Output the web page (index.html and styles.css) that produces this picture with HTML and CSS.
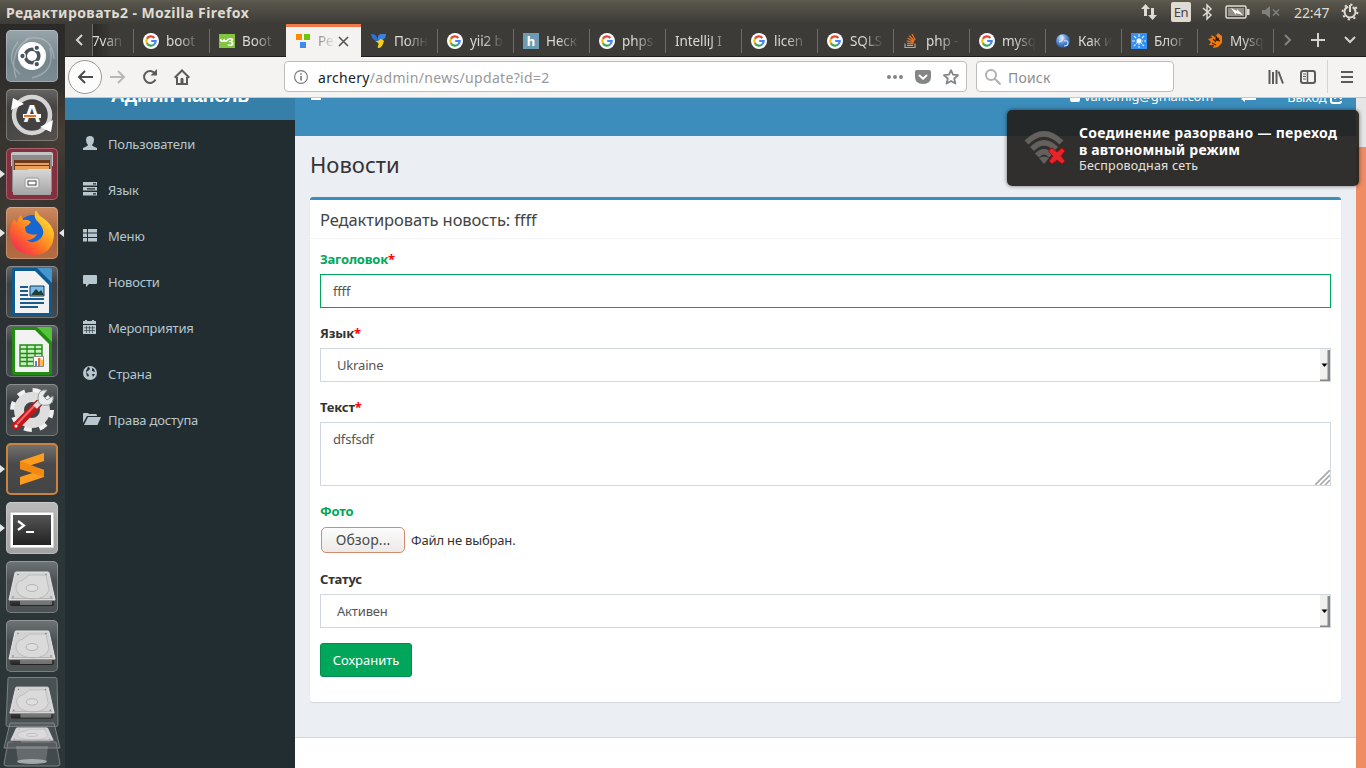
FILE: index.html
```html
<!DOCTYPE html>
<html lang="ru">
<head>
<meta charset="utf-8">
<title>Редактировать2 - Mozilla Firefox</title>
<link rel="stylesheet" href="styles.css">
</head>
<body>
<svg class="defs" width="0" height="0">
  <defs>
    <linearGradient id="metal" x1="0" y1="0" x2="0" y2="1"><stop offset="0" stop-color="#d8d8d8"/><stop offset="1" stop-color="#a4a4a4"/></linearGradient>
    <linearGradient id="dark" x1="0" y1="0" x2="0" y2="1"><stop offset="0" stop-color="#555"/><stop offset="1" stop-color="#222"/></linearGradient>
    <linearGradient id="fire" x1="1" y1="0" x2="0.1" y2="1"><stop offset="0" stop-color="#fff44f"/><stop offset="0.35" stop-color="#ffb422"/><stop offset="0.65" stop-color="#ff6a2a"/><stop offset="1" stop-color="#f0205a"/></linearGradient>
    <radialGradient id="ball" cx="0.4" cy="0.3" r="0.7"><stop offset="0" stop-color="#dbe9fb"/><stop offset="0.5" stop-color="#5c8fd6"/><stop offset="1" stop-color="#234f9b"/></radialGradient>
    <symbol id="google" viewBox="0 0 16 16">
      <circle cx="8" cy="8" r="8" fill="#fff"/>
      <g fill="none" stroke-width="2.2">
        <path d="M11.4 4.9A4.7 4.7 0 0 0 3.9 5.7" stroke="#ea4335"/>
        <path d="M3.9 5.7A4.7 4.7 0 0 0 3.9 10.3" stroke="#fbbc05"/>
        <path d="M3.9 10.3A4.7 4.7 0 0 0 11.1 11.5" stroke="#34a853"/>
        <path d="M11.1 11.5A4.6 4.6 0 0 0 12.7 8H8.2" stroke="#4285f4"/>
      </g>
    </symbol>
    <symbol id="disk" viewBox="0 0 52 52">
      <path d="M4 35h44v8q0 2-2 2H6q-2 0-2-2z" fill="url(#dark)"/>
      <path d="M24 40h22v4H14v-4z" fill="#999" opacity=".65"/>
      <path d="M9 12q0-1 1-1h32q1 0 1 1l6 27H3z" fill="#d3d3d3" stroke="#e6e6e6"/>
      <path d="M10 28q-1-7 7-9l6-5h17l3 15q-3 9-17 9-14-1-16-10z" fill="#dadada" stroke="#bcbcbc"/>
      <ellipse cx="26" cy="27" rx="6" ry="3.500" fill="#dfdfdf" stroke="#b2b2b2"/>
      <path d="M5 37.500h42" stroke="#b4b4b4"/>
      <circle cx="7" cy="36" r=".8" fill="#777"/><circle cx="45" cy="36" r=".8" fill="#777"/>
      <circle cx="12" cy="13.500" r=".7" fill="#777"/><circle cx="40" cy="13.500" r=".7" fill="#777"/>
    </symbol>
    <symbol id="drop" viewBox="0 0 10 32">
      <path d="M0 0h10v32H0z" fill="#f0f0ef"/>
      <path d="M7.500 1H10v31H0v-1.500h7.500z" fill="#858585"/>
      <path d="M1.500 14.500h6l-3 3.500z" fill="#000"/>
    </symbol>
  </defs>
</svg>

<div class="desktop">
  <header class="panel">
    <span class="panel-title">Редактировать2 - Mozilla Firefox</span>
    <div class="indicators">
      <svg width="18" height="18" viewBox="0 0 18 18" fill="#dfdbd2"><path d="M5.500 1L10 6H7v7H4V6H1zM12.500 17L8 12h3V5h3v7h3z"/></svg>
      <span class="lang">En</span>
      <svg class="bt" width="12" height="18" viewBox="0 0 12 18" fill="none" stroke="#dfdbd2" stroke-width="1.500"><path d="M2 5l8 7-4 4V2l4 4-8 7"/></svg>
      <svg class="bat" width="25" height="14" viewBox="0 0 25 14"><rect x="1" y="1" width="20" height="12" rx="1.500" fill="none" stroke="#dfdbd2" stroke-width="1.500"/><rect x="3" y="3" width="16" height="8" fill="#928f87"/><path d="M22 4h2.500v6H22z" fill="#dfdbd2"/><path d="M6 3l6 3 0-2 6 6-7-2 0 2z" fill="#fff"/></svg>
      <svg class="vol" width="18" height="14" viewBox="0 0 18 14" fill="#82807a"><path d="M0 5h3l5-4v12L3 9H0z"/><path d="M11 4.500l6 6m0-6l-6 6" stroke="#82807a" stroke-width="1.600"/></svg>
      <span class="clock">22:47</span>
      <svg class="gear" width="18" height="18" viewBox="0 0 18 18" fill="none" stroke="#dfdbd2"><circle cx="9" cy="9" r="5.500" stroke-width="2" stroke-dasharray="30 4.600" stroke-dashoffset="-28"/><path d="M9 2v7" stroke-width="2"/><circle cx="9" cy="9" r="7.400" stroke-width="2" stroke-dasharray="2.200 3.610"/></svg>
    </div>
  </header>

  <div class="main">
    <nav class="launcher">
      <div class="tile t-dash"><svg viewBox="0 0 52 52"><g fill="none" stroke="#fff" opacity=".25" stroke-width="1.500"><path d="M10 48Q2 20 24 8M20 9q26-6 28 20M44 18q6 24-18 30M12 12Q-2 30 14 44"/></g><circle cx="26" cy="26" r="14" fill="#fff"/><circle cx="26" cy="26" r="6.800" fill="none" stroke="#4a555b" stroke-width="3.600"/><g fill="#4a555b" stroke="#fff" stroke-width="1.300"><circle cx="16.500" cy="26" r="2.800"/><circle cx="30.800" cy="17.800" r="2.800"/><circle cx="30.800" cy="34.200" r="2.800"/></g></svg></div>
      <div class="tile t-glass"><svg viewBox="0 0 52 52"><circle cx="26" cy="26" r="18" fill="#444240" stroke="#d4d4d4" stroke-width="4.500"/><path d="M5 21l2-12 11 6zM47 31l-2 12-11-5z" fill="#fff"/><text x="26" y="33" class="a-letter">A</text><path d="M17 27h18" stroke="#fff" stroke-width="4"/><path d="M18 27h12" stroke="#f46a1f" stroke-width="2"/></svg></div>
      <div class="tile t-files running"><svg viewBox="0 0 52 52"><path d="M7 4h38q2 0 2 2v12H5V6q0-2 2-2z" fill="#c4c4c4"/><path d="M6 7h40v37H6z" fill="#8d8d8d"/><path d="M8 12h36v12H8z" fill="#6d3b1b"/><path d="M9 15h34v2H9zM9 18h34v4H9z" fill="#e8a05a"/><path d="M7 22h14l2-1h22v25q0 1-1 1H8q-1 0-1-1z" fill="url(#metal)"/><rect x="19" y="30" width="14" height="10" rx="2" fill="#eee" stroke="#999"/><rect x="22" y="33" width="8" height="4" fill="#fff" stroke="#444"/></svg></div>
      <div class="tile t-fox running active"><svg viewBox="0 0 52 52"><circle cx="27" cy="24" r="16" fill="#1767d2"/><path d="M30 3q2 5 7 8 9 6 11 15 0 22-22 22Q5 46 4 26q0-8 4-14l3 4q1-5 4-8l2 5q5-1 8 2-2 3-6 5 0 4 2 6 6 3 10 1-3 6-10 6 6 5 13-1 7-7-1-16-7-6-3-13z" fill="url(#fire)"/></svg></div>
      <div class="tile t-glass"><svg viewBox="0 0 52 52"><path d="M8 2h24l14 14v32q0 2-2 2H8q-2 0-2-2V4q0-2 2-2z" fill="#0d5a91"/><path d="M9 5h20l14 14v28H9z" fill="#f2f2f2"/><path d="M31 2h13q2 0 2 2v13z" fill="#4695cf"/><path d="M14 21h8M14 25h8M14 29h8M14 33h24M14 37h24M14 41h18" stroke="#1b5c8c" stroke-width="2"/><path d="M24 20h14v10H24z" fill="#76bde8" stroke="#173c5a"/><path d="M25 29l5-6 3 3 2-2 3 5z" fill="#263c36"/></svg></div>
      <div class="tile t-glass"><svg viewBox="0 0 52 52"><path d="M8 2h24l14 14v32q0 2-2 2H8q-2 0-2-2V4q0-2 2-2z" fill="#218b12"/><path d="M9 5h20l14 14v28H9z" fill="#f2f2f2"/><path d="M31 2h13q2 0 2 2v13z" fill="#56c43a"/><path d="M14 20h22v21H14z" fill="#c9f0c2"/><path d="M14 20h22v21H14zM14 24h22M14 28.500h22M14 32.500h22M14 36.500h22M21 20v21M29 20v21" fill="none" stroke="#218b12" stroke-width="1.400"/><path d="M27.500 31.500h10v10h-10z" fill="#fff" stroke="#888"/><path d="M29 36h2v5h-2z" fill="#3a8fd8"/><path d="M32 33h2.500v8H32z" fill="#f06a1e"/><path d="M35 35h2v6h-2z" fill="#f2c321"/></svg></div>
      <div class="tile t-glass"><svg viewBox="0 0 52 52"><circle cx="26" cy="26" r="19.500" fill="none" stroke="#f0f0f0" stroke-width="5" stroke-dasharray="7.700 7.615"/><circle cx="26" cy="26" r="13" fill="none" stroke="#dedede" stroke-width="10"/><path d="M10 42L32 20" stroke="#c3171d" stroke-width="8" stroke-linecap="round"/><path d="M11 40L31 19" stroke="#ef6a68" stroke-width="2"/><path d="M29 23l6-6" stroke="#d9dede" stroke-width="5"/><path d="M41 6q-9-1-9 8t10 7q6-2 5-9l-6 4-4-4z" fill="#e8ecec" stroke="#939b9b"/><circle cx="10" cy="42" r="1.500" fill="#fff"/></svg></div>
      <div class="tile t-sub running"><svg viewBox="0 0 52 52"><path d="M14 18l24-8v8l-14 4.500L38 27v7l-24 8v-8l14-4.500L14 26z" fill="#ff9c1d"/><path d="M14 18l24 9v7l-24-8z" fill="#f28a12"/></svg></div>
      <div class="tile t-term running"><svg viewBox="0 0 52 52"><path d="M4 10h44v36H4z" fill="#fff" stroke="#aaa"/><path d="M7 13h38v30H7z" fill="url(#dark)"/><path d="M12 19l6 4.500-6 4.500M20 30h8" fill="none" stroke="#fff" stroke-width="2.200"/></svg></div>
      <div class="tile t-disk"><svg viewBox="0 0 52 52"><use href="#disk"/></svg></div>
      <div class="tile t-disk"><svg viewBox="0 0 52 52"><use href="#disk"/></svg></div>
      <svg class="stack" width="58" height="93" viewBox="0 0 58 93">
        <path d="M5 2.500q0-1 1-1h46q2 0 2 2l1 45q0 2-2 2H5q-2 0-2-2z" fill="#6e7476" fill-opacity=".45" stroke="#7c8284"/>
        <svg x="4" y="1" width="50" height="48" viewBox="0 0 52 52" preserveAspectRatio="none"><use href="#disk"/></svg>
        <path d="M7 47h44l6 25H1z" fill="#6e7476" fill-opacity=".4" stroke="#7c8284"/>
        <svg x="5" y="47" width="48" height="23" viewBox="0 0 52 52" preserveAspectRatio="none"><use href="#disk"/></svg>
        <path d="M5 66h48l4 22q0 2-3 2H4q-3 0-3-2z" fill="#888" fill-opacity=".25" stroke="#7c8284"/>
        <path d="M13 70h32l-2 16H15z" fill="#ccc" fill-opacity=".25"/><ellipse cx="29" cy="85.500" rx="15" ry="2.500" fill="#b8bcbc" opacity=".8"/>
      </svg>
    </nav>

    <div class="window">
      <div class="tabs">
        <span class="scroll-l"><svg width="8" height="12" viewBox="0 0 8 12" fill="none" stroke="#d5d3ce" stroke-width="2"><path d="M7 1L2 6l5 5"/></svg></span>
        <div class="tab cut"><span class="label">7van</span></div>
        <div class="tab"><svg class="fav"><use href="#google"/></svg><span class="label">boot</span></div>
        <div class="tab"><svg class="fav" viewBox="0 0 16 16"><path d="M0 1h16v14H0z" fill="#83c441"/><path d="M1.500 6q1 4 3.500 1 1 3 4.500-1" fill="none" stroke="#fff" stroke-width="1.600"/><text x="8.600" y="12.500" class="w3">3</text></svg><span class="label">Boot</span></div>
        <div class="tab on"><svg class="fav" viewBox="0 0 16 16"><path d="M1 1h6v6H1z" fill="#ff8a00"/><path d="M9 1h6v6H9z" fill="#70c600"/><path d="M5 9h6v6H5z" fill="#3b8cf0"/></svg><span class="label">Ре</span><svg class="close" width="11" height="11" viewBox="0 0 11 11"><path d="M1 1l9 9M10 1l-9 9" stroke="#555" stroke-width="1.600"/></svg></div>
        <div class="tab first"><svg class="fav" viewBox="0 0 16 16"><path d="M0 1q6-1 7 7Q1 8 0 1z" fill="#2e72d8"/><path d="M7 8Q6 1 10 1l5 0q0 6-6 6z" fill="#3a82dc"/><path d="M4 8q5 0 5-2 3 0 4 2-2 7-5 7-2 0-1-2 2-3-3-5z" fill="#f5cf1d"/></svg><span class="label">Полн</span></div>
        <div class="tab"><svg class="fav"><use href="#google"/></svg><span class="label">yii2 b</span></div>
        <div class="tab"><svg class="fav" viewBox="0 0 16 16"><path d="M0 0h16v16H0z" fill="#6c9cb5"/><text x="8" y="13" class="habr">h</text></svg><span class="label">Неск</span></div>
        <div class="tab"><svg class="fav"><use href="#google"/></svg><span class="label">phps</span></div>
        <div class="tab"><span class="label wide">IntelliJ I</span></div>
        <div class="tab"><svg class="fav"><use href="#google"/></svg><span class="label">licen</span></div>
        <div class="tab"><svg class="fav"><use href="#google"/></svg><span class="label">SQLS</span></div>
        <div class="tab"><svg class="fav" viewBox="0 0 16 16" fill="none"><path d="M2 10.500v4h10v-4M4 12.500h6" stroke="#a9abad" stroke-width="1.200"/><path d="M4 10.500l6.500.3M3.800 7.800l6.700 1.900M4.500 5l6.200 3.600M6.300 2.800l5 5.200M9 1l3.200 6" stroke="#e87522" stroke-width="1.300"/></svg><span class="label">php -</span></div>
        <div class="tab"><svg class="fav"><use href="#google"/></svg><span class="label">mysq</span></div>
        <div class="tab"><svg class="fav" viewBox="0 0 16 16"><circle cx="8" cy="8" r="7" fill="url(#ball)"/><path d="M5 3q3-1 3 2T4 9M9 8q4-1 4 2t-4 3" fill="none" stroke="#d8e6f7" stroke-width="1.200"/></svg><span class="label">Как и</span></div>
        <div class="tab"><svg class="fav" viewBox="0 0 16 16"><path d="M0 0h16v16H0z" fill="#3390f5"/><path d="M8 1v14M1 8h14M3 3l10 10M13 3L3 13" stroke="#d6eaff" stroke-width="1.200" stroke-dasharray="3 1"/><circle cx="8" cy="8" r="2" fill="#fff"/></svg><span class="label">Блог</span></div>
        <div class="tab"><svg class="fav" viewBox="0 0 16 16"><path d="M1 6l4-1-1-3 4 2 3-4 4 3v7l-4 4-5 1 1-3-5 0 2-3z" fill="#f37a0b"/><path d="M6 6l3 3M9 3v4l4 1M5 10l4 2M12 5l-2 1" stroke="#4b2606" stroke-width="1.200"/></svg><span class="label">Mysq</span></div>
        <div class="tab-tools">
          <svg width="8" height="12" viewBox="0 0 8 12" fill="none" stroke="#85837e" stroke-width="2"><path d="M1 1l5 5-5 5"/></svg>
          <svg width="14" height="14" viewBox="0 0 14 14" stroke="#d5d3ce" stroke-width="2"><path d="M7 0v14M0 7h14"/></svg>
          <svg width="12" height="8" viewBox="0 0 12 8" fill="none" stroke="#d5d3ce" stroke-width="2"><path d="M1 1l5 5 5-5"/></svg>
        </div>
      </div>

      <div class="toolbar">
        <span class="back"><svg width="16" height="14" viewBox="0 0 16 14" fill="none" stroke="#4c4c4c" stroke-width="2"><path d="M16 7H2M8 1L2 7l6 6"/></svg></span>
        <svg class="fwd" width="16" height="14" viewBox="0 0 16 14" fill="none" stroke="#b9b8b6" stroke-width="2"><path d="M0 7h14M8 1l6 6-6 6"/></svg>
        <svg class="reload" width="16" height="16" viewBox="0 0 16 16" fill="none" stroke="#5c5b59" stroke-width="2"><path d="M13.500 10.500A6 6 0 1 1 13 4.500"/><path d="M15 0v6.500H8.500z" fill="#5c5b59" stroke="none"/></svg>
        <svg class="home" width="16" height="16" viewBox="0 0 16 16" fill="none" stroke="#5c5b59" stroke-width="2"><path d="M.700 8.700L8 1.500l7.300 7.200M3 8v7h10V8"/><path d="M7 9.500h2V15H7z" fill="#5c5b59" stroke-width="1"/></svg>
        <div class="url">
          <svg width="14" height="14" viewBox="0 0 14 14" fill="none" stroke="#777"><circle cx="7" cy="7" r="6.400" stroke-width="1.100"/><path d="M7 6v4.500M7 3.200v1.600" stroke-width="1.600"/></svg>
          <span class="addr"><b>archery</b>/admin/news/update?id=2</span>
          <svg class="dots" width="16" height="4" viewBox="0 0 16 4" fill="#858585"><circle cx="2" cy="2" r="2"/><circle cx="8" cy="2" r="2"/><circle cx="14" cy="2" r="2"/></svg>
          <svg class="pocket" width="16" height="15" viewBox="0 0 16 15"><path d="M2 0h12q2 0 2 2v5q0 7-8 7T0 7V2q0-2 2-2z" fill="#858585"/><path d="M4.500 5.500L8 8.700l3.500-3.200" fill="none" stroke="#fff" stroke-width="2" stroke-linecap="round"/></svg>
          <svg width="16" height="16" viewBox="0 0 16 16" fill="none" stroke="#858585" stroke-width="1.800" stroke-linejoin="round"><path d="M8 1.200l2 4.500 5 .5-3.800 3.300 1.200 5L8 12l-4.400 2.500 1.200-5L1 6.200l5-.5z"/></svg>
        </div>
        <div class="search">
          <svg width="16" height="16" viewBox="0 0 16 16" fill="none" stroke="#b0b0b0" stroke-width="2"><circle cx="6" cy="6" r="5"/><path d="M9.500 9.500l6 6"/></svg>
          <span>Поиск</span>
        </div>
        <svg class="lib" width="16" height="14" viewBox="0 0 16 14" stroke="#5c5b59" stroke-width="2"><path d="M1.500 0v14M5 2v12M8.500 0v14M10.500 1.500L15 13.500"/></svg>
        <svg class="side" width="16" height="14" viewBox="0 0 16 14" fill="none" stroke="#5c5b59" stroke-width="2"><rect x="1" y="1" width="14" height="12" rx="2"/><path d="M7.500 1v12" stroke-width="1.500"/><path d="M3 4h3M3 6.500h3M3 9h3" stroke-width="1"/></svg>
        <span class="sep"></span>
        <svg class="burger" width="12" height="12" viewBox="0 0 12 12" stroke="#5c5b59" stroke-width="2"><path d="M0 1h12M0 6h12M0 11h12"/></svg>
      </div>

      <div class="page">
        <aside class="sidebar">
          <div class="logo"><span>Админ панель</span></div>
          <ul class="menu">
            <li><svg viewBox="0 0 16 14"><path d="M7 0q4 0 4 4 0 3-2 5 0 1 5 3v2H0v-2q5-2 5-3-2-2-2-5 0-4 4-4z"/></svg>Пользователи</li>
            <li><svg viewBox="0 0 16 14"><path d="M0 0h14v3.500H0zM0 5h14v3.500H0zM0 10h14v3.500H0z"/><path d="M10 1.800h3M4 6.800h8M10 11.800h3" stroke="#222d32" stroke-width="1.200"/></svg>Язык</li>
            <li><svg viewBox="0 0 16 14"><path d="M0 1h4v3.500H0zM5 1h9v3.500H5zM0 5.500h4V9H0zM5 5.500h9V9H5zM0 10h4v3.500H0zM5 10h9v3.500H5z"/></svg>Меню</li>
            <li><svg viewBox="0 0 16 14"><path d="M1 1h12q1 0 1 1v7q0 1-1 1H6l-3 3v-3H1q-1 0-1-1V2q0-1 1-1z"/></svg>Новости</li>
            <li><svg viewBox="0 0 16 14"><path d="M0 1h2V0h2v1h5V0h2v1h2v3H0zM0 5h13v9H0z"/><path d="M3.500 6v7M6.500 6v7M9.500 6v7M1 7.800h11M1 10.500h11" stroke="#222d32" stroke-width=".6"/></svg>Мероприятия</li>
            <li><svg viewBox="0 0 16 14"><circle cx="7" cy="7" r="7"/><path d="M5 1q2 0 2 2L5 5q-2 0-1 2l2 2-1 2Q3 9 3 5zM9 2l2 1 1 3-3-1zM9 8l3 0-2 3z" fill="#222d32"/></svg>Страна</li>
            <li><svg class="wide-ico" viewBox="0 0 18 14"><path d="M0 11V2q0-1 1-1h4l1 1h7q1 0 1 2H4z"/><path d="M5 5h13l-3.500 8H1z"/></svg>Права доступа</li>
          </ul>
        </aside>
        <main class="content">
          <div class="navbar">
            <span class="toggle"></span>
            <span class="user"><i></i>vanolmig@gmail.com</span>
            <svg class="swap" width="16" height="8" viewBox="0 0 16 8" fill="#fff"><path d="M0 5l4-3v2h11v2H4v2z"/></svg>
            <span class="exit">Выход <svg width="14" height="12" viewBox="0 0 14 12" fill="none" stroke="#fff" stroke-width="2"><path d="M6 1H3Q1 1 1 3v6q0 2 2 2h6q2 0 2-2M5 7q0-3 7-3M10 1l3 3-3 3"/></svg></span>
          </div>
          <h1>Новости</h1>
          <section class="box">
            <h3>Редактировать новость: ffff</h3>
            <form class="form">
              <div class="group ok"><label>Заголовок<em>*</em></label><div class="control">ffff</div></div>
              <div class="group"><label>Язык<em>*</em></label><div class="control select"><span>Ukraine</span><svg width="10" height="32"><use href="#drop"/></svg></div></div>
              <div class="group"><label>Текст<em>*</em></label><div class="control area"><span>dfsfsdf</span><svg width="15" height="15" viewBox="0 0 15 15" stroke="#aaa" stroke-width="1.700"><path d="M0 15L15 0M5 15L15 5M10 15l5-5"/></svg></div></div>
              <div class="group ok"><label>Фото</label><div class="file"><span class="browse">Обзор...</span><span class="nofile">Файл не выбран.</span></div></div>
              <div class="group"><label>Статус</label><div class="control select"><span>Активен</span><svg width="10" height="32"><use href="#drop"/></svg></div></div>
              <button class="save" type="button">Сохранить</button>
            </form>
          </section>
          <div class="footer"></div>
        </main>
        <div class="scrollbar"><div class="thumb"></div></div>
      </div>
    </div>
  </div>

  <div class="toast">
    <svg width="44" height="38" viewBox="0 0 44 38"><g fill="none" stroke="#63605d" stroke-width="5.600"><path d="M2.500 12.500Q20 -5 37.500 12.500"/><path d="M8 19Q20 7 32 19"/><path d="M13 25.500Q20 18 27 25.500"/></g><path d="M15 28q5-3 10 0L20 34z" fill="#63605d"/><path d="M25 20l3-2 5 4 5-4 3 3-4 5 4 5-3 3-5-4-5 4-3-3 4-5-4-4z" fill="#e4252a" stroke="#a8090e"/></svg>
    <div class="toast-text"><b>Соединение разорвано — переход</b><b class="l2">в автономный режим</b><span>Беспроводная сеть</span></div>
  </div>
</div>
</body>
</html>
```
FILE: styles.css
```css
* { box-sizing: border-box; }
body { margin: 0; width: 1366px; height: 768px; overflow: hidden; font-family: "Noto Sans", sans-serif; }
.defs { position: absolute; }
.desktop { position: relative; width: 1366px; height: 768px; display: flex; flex-direction: column; overflow: hidden; }
svg { display: block; flex: none; }

/* top panel */
.panel { height: 24px; flex: none; display: flex; align-items: center; justify-content: space-between; padding: 0 7px 0 6px; background: linear-gradient(#5f5c50, #57544b 3px, #3d3b37); color: #dfdbd2; }
.panel-title { font-size: 14px; font-weight: 700; letter-spacing: .42px; }
.indicators { display: flex; align-items: center; }
.lang { margin-left: 13px; width: 20px; height: 20px; border-radius: 2px; background: #dfdbd2; color: #45433e; font-size: 13px; line-height: 20px; text-align: center; letter-spacing: -.5px; }
.bt { margin-left: 10px; }
.bat { margin-left: 12px; }
.vol { margin-left: 12px; }
.clock { margin-left: 14px; width: 37px; font-size: 14px; letter-spacing: -.1px; white-space: nowrap; }
.gear { margin-left: 10px; }

.main { flex: 1; display: flex; min-height: 0; }

/* launcher */
.launcher { width: 65px; flex: none; display: flex; flex-direction: column; align-items: center; gap: 7px; padding-top: 6px; padding-right: 1px;
  background: radial-gradient(circle at 20px 200px, #5a4a3c66, transparent 60px), radial-gradient(circle at 60px 110px, #6a56424d, transparent 50px), linear-gradient(#2b2a29, #38342f 120px, #2c2f30 230px, #2b3336 350px, #2c3639); }
.tile { position: relative; width: 52px; height: 52px; flex: none; border-radius: 5px; box-shadow: inset 0 0 0 1px #ffffff40; }
.tile > svg { width: 52px; height: 52px; }
.t-dash { background: linear-gradient(#98a4a9, #74858d 60%, #7d8d93); }
.t-glass { background: linear-gradient(#8a8a8a99, #5b5e6059 35%, #65686a73); }
.t-files { background: #84303f; }
.t-fox { background: linear-gradient(#cf8a60, #a9663f 50%, #b46c42); }
.t-sub { background: linear-gradient(#777470, #4a4a4b 40%, #434446); box-shadow: inset 0 0 0 2px #c98240; }
.t-term { background: linear-gradient(#b9b9b9, #a2a2a2); }
.t-disk { background: linear-gradient(#6f7577, #4a5052 40%, #4d5355); }
.running::before { content: ""; position: absolute; left: -6px; top: 22px; border: 4px solid transparent; border-left: 5px solid #e6e6e6; border-right: 0; }
.active::after { content: ""; position: absolute; right: -6px; top: 22px; border: 4px solid transparent; border-right: 5px solid #e6e6e6; border-left: 0; }
.stack { margin-top: -3px; }
.a-letter { font: 700 24px "Liberation Sans", sans-serif; fill: #fff; text-anchor: middle; }

/* browser */
.window { flex: 1; display: flex; flex-direction: column; min-width: 0; }
.tabs { height: 33px; flex: none; display: flex; background: #3c3b37; border-bottom: 1px solid #1e1d1b; }
.scroll-l { width: 27px; display: flex; align-items: center; justify-content: center; }
.tab { width: 76px; flex: none; display: flex; align-items: center; padding: 1px 0 0 9px; height: 32px; background: linear-gradient(#6f6d67, #6f6d67) left 5px / 1px 24px no-repeat; }
.cut { width: 41px; padding-left: 0; background: linear-gradient(#6f6d67, #6f6d67) left / 1px 100% no-repeat, linear-gradient(90deg, #2a2926, #3c3b37 20px); }
.fav { width: 16px; height: 16px; margin-left: 1px; }
.label { margin-left: 7px; width: 35px; overflow: hidden; white-space: nowrap; font-size: 13.5px; line-height: 20px; color: #dcdad5; letter-spacing: -.1px; -webkit-mask-image: linear-gradient(90deg, #000 35%, transparent 97%); mask-image: linear-gradient(90deg, #000 35%, transparent 97%); }
.cut .label { margin-left: 0; width: 34px; }
.wide { margin-left: 1px; width: 58px; -webkit-mask-image: linear-gradient(90deg, #000 60%, transparent 97%); mask-image: linear-gradient(90deg, #000 60%, transparent 97%); }
.on { background: #f4f3f2; height: 33px; margin-left: 1px; width: 75px; padding: 0 0 2px 9px; border-top: 3px solid #f07746; }
.on .fav { margin-left: 0; }
.on .label { width: 19px; color: #555; -webkit-mask-image: linear-gradient(90deg, #000a, transparent 97%); mask-image: linear-gradient(90deg, #000a, transparent 97%); }
.on .close { margin-left: 1px; }
.first { background: none; }
.w3 { font: 700 11px "Noto Sans", sans-serif; fill: #fff; }
.habr { font: 700 13px "Noto Sans", sans-serif; fill: #fff; text-anchor: middle; }
.tab-tools { flex: 1; display: flex; align-items: center; justify-content: space-between; padding: 0 10px 0 11px; background: linear-gradient(#6f6d67, #6f6d67) left 5px / 1px 24px no-repeat; }

.toolbar { height: 41px; flex: none; display: flex; align-items: center; padding: 0 13px 1px 3px; background: #f4f3f2; border-bottom: 1px solid #c9c7c4; }
.back { width: 34px; height: 34px; border: 1px solid #9a9997; border-radius: 50%; background: #fcfcfc; display: flex; align-items: center; justify-content: center; }
.fwd { margin-left: 8px; }
.reload { margin-left: 16px; }
.home { margin-left: 16px; }
.url { margin-left: 94px; width: 683px; height: 31px; display: flex; align-items: center; padding: 0 7px 0 9px; background: #fff; border: 1px solid #bfbdbb; border-radius: 4px; }
.addr { flex: 1; margin-left: 10px; padding-top: 1px; font-size: 14px; color: #999; letter-spacing: .32px; }
.addr b { font-weight: 400; color: #222; }
.pocket { margin: 1px 12px 0; }
.search { margin-left: 9px; width: 198px; height: 31px; display: flex; align-items: center; gap: 7px; padding-left: 8px; background: #fff; border: 1px solid #bfbdbb; border-radius: 4px; font-size: 14px; color: #8d8d8d; letter-spacing: .2px; }
.search span { padding-top: 1px; }
.lib { margin-left: 94px; }
.side { margin-left: 16px; }
.sep { margin-left: 11px; width: 1px; height: 33px; background: #d5d4d2; }
.burger { margin-left: 13px; }

.page { flex: 1; display: flex; min-height: 0; font-size: 13px; letter-spacing: -.17px; }
.sidebar { width: 230px; flex: none; background: #222d32; }
.logo { height: 22px; background: #367fa9; overflow: hidden; text-align: center; color: #fff; font: 700 19.6px/24px "Liberation Sans", sans-serif; }
.logo span { display: block; margin-top: -15px; }
.menu { margin: 1px 0 0; padding: 0; list-style: none; color: #b8c7ce; }
.menu li { height: 46px; display: flex; align-items: center; padding-left: 18px; line-height: 20px; }
.menu svg { width: 16px; height: 14px; margin: -2px 9px 0 0; fill: #b8c7ce; }
.menu .wide-ico { width: 18px; margin-right: 7px; }

.content { flex: 1; min-width: 0; display: flex; flex-direction: column; background: #ebeef3; }
.navbar { height: 38px; flex: none; display: flex; align-items: flex-start; background: #3c8dbc; color: #fff; overflow: hidden; padding: 0 0 0 16px; line-height: 18px; }
.toggle { flex: none; width: 10px; height: 2px; background: #fff; }
.user { margin-left: 749px; margin-top: -11px; white-space: nowrap; display: flex; }
.user i { width: 10px; height: 6px; margin: 9px 4px 0 0; border-radius: 2px; background: #fff; }
.swap { margin-left: 28px; margin-top: -4px; }
.exit { margin-left: 30px; margin-top: -10px; display: flex; gap: 3px; white-space: nowrap; }
.exit svg { margin-top: 4px; }
h1 { margin: 13px 15px 0; font-size: 22px; line-height: 30px; font-weight: 400; color: #333; letter-spacing: 0; }
.box { margin: 18px 15px 0; height: 505px; flex: none; background: #fff; border-top: 3px solid #3c8dbc; border-radius: 3px; box-shadow: 0 1px 1px #0000001a; }
h3 { margin: 0; height: 39px; padding: 10px; border-bottom: 1px solid #f4f4f4; font-size: 16.5px; line-height: 20px; font-weight: 400; color: #444; letter-spacing: -.08px; }
.form { padding: 10px; color: #555; }
.group { margin-bottom: 15px; }
label { display: block; height: 20px; margin-bottom: 5px; font-size: 13px; line-height: 20px; font-weight: 700; color: #333; }
label em { font-style: normal; color: #f00; }
.ok label { color: #00a65a; }
.control { height: 34px; border: 1px solid #d2d6de; padding: 6px 12px; line-height: 20px; }
.ok .control { border-color: #00a65a; }
.select { display: flex; justify-content: space-between; padding: 0 0 0 16px; line-height: 32px; }
.area { height: 64px; display: flex; justify-content: space-between; padding: 6px 0 0 12px; }
.area svg { align-self: flex-end; }
.file { height: 28px; display: flex; align-items: center; padding-left: 1px; color: #333; }
.browse { width: 84px; height: 26px; border: 1px solid #d58a69; border-radius: 5px; background: linear-gradient(#fcfcfc, #eceae8); font-size: 14px; line-height: 24px; text-align: center; color: #4a4a4a; letter-spacing: .1px; }
.nofile { margin-left: 6px; }
.save { display: block; width: 92px; height: 34px; padding: 0; background: #00a65a; border: 1px solid #008d4c; border-radius: 3px; color: #fff; font: 13px "Noto Sans", sans-serif; }
.footer { margin-top: auto; height: 31px; background: #fff; border-top: 1px solid #d2d6de; }
.scrollbar { width: 10px; flex: none; background: #e6e6e6; padding-top: 49px; }
.thumb { height: 621px; background: #f08c64; }

.toast { position: absolute; left: 1007px; top: 110px; width: 352px; height: 76px; border-radius: 5px; background: #22201ded; box-shadow: 0 0 4px #0008; display: flex; padding: 14px 0 0 17px; color: #fff; }
.toast > svg { margin-top: 6px; }
.toast-text { margin-left: 11px; font-size: 14px; white-space: nowrap; }
.toast-text b { display: block; line-height: 17px; letter-spacing: .3px; }
.toast-text .l2 { letter-spacing: .18px; }
.toast-text span { display: block; font-size: 12.5px; line-height: 16px; color: #e4e2df; letter-spacing: .2px; }
```
